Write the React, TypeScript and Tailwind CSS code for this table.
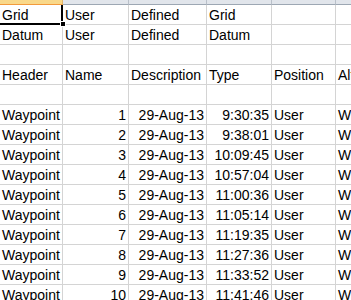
import React from 'react';

type Align = 'l' | 'r';

const widths = ['w-[63px]', 'w-[66px]', 'w-[78px]', 'w-[65px]', 'w-[64px]', 'w-[90px]'];

const times = ['9:30:35', '9:38:01', '10:09:45', '10:57:04', '11:00:36', '11:05:14', '11:19:35', '11:27:36', '11:33:52', '11:41:46'];

const rows: [string, Align][][] = [
  [['Grid', 'l'], ['User', 'l'], ['Defined', 'l'], ['Grid', 'l'], ['', 'l'], ['', 'l']],
  [['Datum', 'l'], ['User', 'l'], ['Defined', 'l'], ['Datum', 'l'], ['', 'l'], ['', 'l']],
  [['', 'l'], ['', 'l'], ['', 'l'], ['', 'l'], ['', 'l'], ['', 'l']],
  [['Header', 'l'], ['Name', 'l'], ['Description', 'l'], ['Type', 'l'], ['Position', 'l'], ['Altitude', 'l']],
  [['', 'l'], ['', 'l'], ['', 'l'], ['', 'l'], ['', 'l'], ['', 'l']],
  ...times.map((t, i): [string, Align][] => [
    ['Waypoint', 'l'],
    [String(i + 1), 'r'],
    ['29-Aug-13', 'r'],
    [t, 'r'],
    ['User', 'l'],
    ['WGS 84', 'l'],
  ]),
];

const Cell: React.FC<{ text: string; align: Align; w: string }> = ({ text, align, w }) => (
  <div
    className={`${w} shrink-0 h-[20px] border-r border-b border-[#d4d4d4] px-[2px] leading-[20px] whitespace-nowrap overflow-hidden ${
      align === 'r' ? 'text-right' : 'text-left'
    }`}
  >
    {text}
  </div>
);

export default function App() {
  return (
    <div
      className="relative w-[351px] h-[300px] overflow-hidden bg-white text-black text-[14px]"
      style={{ fontFamily: '"Liberation Sans", Arial, sans-serif' }}
    >
      {/* column header strip */}
      <div className="flex h-[5px]">
        {widths.map((w, i) => (
          <div
            key={i}
            className={`${w} shrink-0 border-r border-b ${
              i === 0 ? 'bg-[#f9d88a] border-b-[#f29a3c] border-r-[#e3b56a]' : 'bg-[#e1e5eb] border-b-[#9da7b3] border-r-[#b9c0c9]'
            }`}
          />
        ))}
      </div>

      {rows.map((r, ri) => (
        <div key={ri} className="flex">
          {r.map(([text, align], ci) => (
            <Cell key={ci} text={text} align={align} w={widths[ci]} />
          ))}
        </div>
      ))}

      {/* active cell A1 selection */}
      <div className="absolute left-[-2px] top-[5px] w-[65px] h-[20px] border-2 border-t-0 border-black pointer-events-none" />
      <div className="absolute left-[60px] top-[21px] w-[6px] h-[6px] bg-black border border-white" />
    </div>
  );
}
